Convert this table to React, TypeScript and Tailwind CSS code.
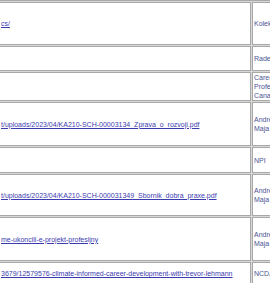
import React from 'react';

interface Row {
  link?: string;
  source: string[];
  height: number;
}

const rows: Row[] = [
  { link: 'cs/', source: ['Kolektiv'], height: 43 },
  { source: ['Radek'], height: 25 },
  { source: ['Career', 'Professionals', 'Canada'], height: 26 },
  { link: 't/uploads/2023/04/KA210-SCH-00003134_Zprava_o_rozvoji.pdf', source: ['Andrea', 'Maja'], height: 44 },
  { source: ['NPI'], height: 26 },
  { link: 't/uploads/2023/04/KA210-SCH-000031349_Sbornik_dobra_praxe.pdf', source: ['Andrea', 'Maja'], height: 42 },
  { link: 'me-ukoncili-e-projekt-profesijny', source: ['Andrea', 'Maja'], height: 44 },
  { link: '3679/12579576-climate-informed-career-development-with-trevor-lehmann', source: ['NCDA'], height: 23 },
];

export default function App() {
  return (
    <div className="w-[270px] h-[283px] overflow-hidden bg-white">
      <table
        className="-ml-[3px] w-[320px] border-separate border-spacing-[1px] border border-[#a8a8a8] bg-[#d8d8d8] table-fixed text-[7px] leading-[9px]"
        style={{ fontFamily: '"Liberation Sans", Arial, sans-serif' }}
      >
        <colgroup>
          <col className="w-[252px]" />
          <col className="w-[64px]" />
        </colgroup>
        <tbody>
          {rows.map((row, i) => (
            <tr key={i}>
              <td
                className="bg-white border border-[#a8a8a8] px-px py-0 align-middle whitespace-nowrap overflow-hidden"
                style={{ height: row.height }}
              >
                {row.link && (
                  <a href="#" className="text-[#3b3bb0] underline">
                    {row.link}
                  </a>
                )}
              </td>
              <td className="bg-white border border-[#a8a8a8] px-px py-0 align-middle text-[#4b5394] whitespace-nowrap overflow-hidden">
                {row.source.map((s, j) => (
                  <div key={j}>{s}</div>
                ))}
              </td>
            </tr>
          ))}
        </tbody>
      </table>
    </div>
  );
}
